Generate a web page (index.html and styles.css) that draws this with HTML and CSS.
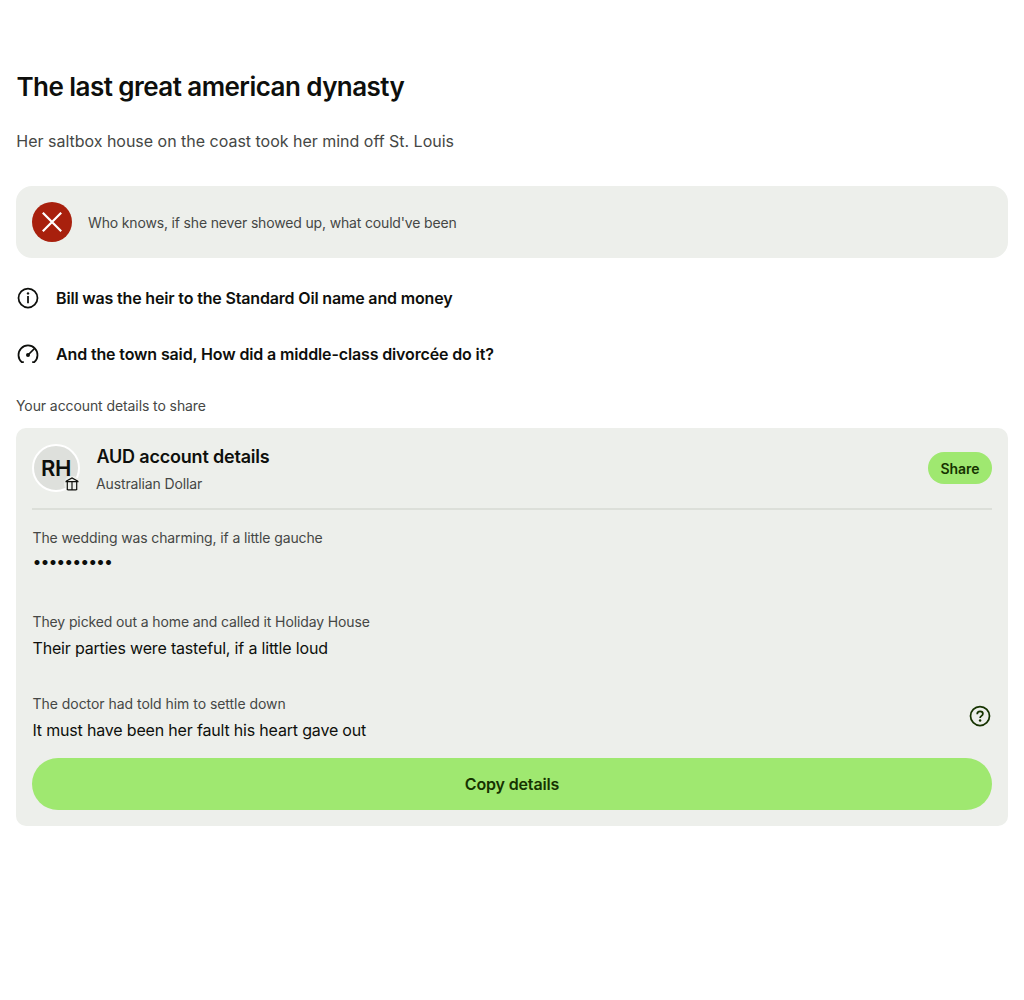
FILE: index.html
```html
<!DOCTYPE html>
<html lang="en">
<head>
<meta charset="utf-8">
<title>Account details</title>
<link rel="stylesheet" href="styles.css">
</head>
<body>
<main class="page">
  <h1 class="title">The last great american dynasty</h1>
  <p class="subtitle">Her saltbox house on the coast took her mind off St. Louis</p>
  <div class="alert">
    <svg class="alert-icon" viewBox="0 0 40 40"><circle cx="20" cy="20" r="20" fill="#a8200d"/><path d="M10.8 10.8 29.2 29.2M29.2 10.8 10.8 29.2" stroke="#fff" stroke-width="2.2"/></svg>
    <span class="alert-text">Who knows, if she never showed up, what could've been</span>
  </div>
  <ul class="summary">
    <li class="summary-item">
      <svg class="icon" viewBox="0 0 24 24"><circle cx="12" cy="12" r="9.5"/><path d="M12 10v7.200"/><circle class="dot" cx="12" cy="7.400" r="1.200"/></svg>
      <span class="first-text">Bill was the heir to the Standard Oil name and money</span>
    </li>
    <li class="summary-item">
      <svg class="icon" viewBox="0 0 24 24"><path d="M7.800 20.100H5.700A9.500 9.500 0 1 1 18.300 20.100H16.200"/><path d="M12 13 18.500 6.500"/><circle class="dot" cx="12" cy="13" r="2"/></svg>
      <span class="second-text">And the town said, How did a middle-class divorcée do it?</span>
    </li>
  </ul>
  <h2 class="section-label">Your account details to share</h2>
  <section class="card">
    <header class="card-header">
      <div class="avatar">RH
        <svg class="bank" viewBox="0 0 16 16"><path d="M2 5.300 8 1.900l6 3.400M1.500 5.700h13M3.300 6v8M8 6v8M12.700 6v8M2.600 13.800h10.800"/></svg>
      </div>
      <div class="heading">
        <h3 class="card-title">AUD account details</h3>
        <p class="card-subtitle">Australian Dollar</p>
      </div>
      <button class="share">Share</button>
    </header>
    <dl class="rows">
      <div class="row"><div><dt>The wedding was charming, if a little gauche</dt><dd class="masked">••••••••••</dd></div></div>
      <div class="row"><div><dt>They picked out a home and called it Holiday House</dt><dd>Their parties were tasteful, if a little loud</dd></div></div>
      <div class="row"><div><dt class="last-label">The doctor had told him to settle down</dt><dd>It must have been her fault his heart gave out</dd></div>
        <svg class="icon help" viewBox="0 0 24 24"><circle cx="12" cy="12" r="9.5"/><path d="M9.200 10.200c0-1.700 1.200-2.800 2.900-2.800s2.800 1 2.800 2.400c0 2.100-2.800 2-2.800 4.200"/><circle class="dot" cx="12.100" cy="16.500" r="1.250"/></svg></div>
    </dl>
    <button class="copy">Copy details</button>
  </section>
</main>
</body>
</html>
```
FILE: styles.css
```css
* { box-sizing: border-box; margin: 0; padding: 0; }
body { font-family: Inter, "Liberation Sans", sans-serif; font-size: 16px; line-height: 24px; color: #0e0f0c; background: #fff; }
.page { padding: 70px 16px 0; }
.title { padding-left: 0.5px; font-size: 26px; line-height: 34px; font-weight: 600; letter-spacing: -0.55px; }
.subtitle { margin-top: 25px; padding-left: 0.3px; color: #454745; letter-spacing: -0.015px; }
.alert { display: flex; align-items: center; gap: 16px; height: 72px; margin-top: 33px; padding: 16px; border-radius: 16px; background: #edefeb; }
.alert-icon { width: 40px; height: 40px; }
.alert-text { margin-top: 1px; font-size: 14px; line-height: 22px; letter-spacing: -0.16px; color: #454745; }
.summary { list-style: none; margin-top: 12px; }
.summary-item { display: flex; align-items: center; gap: 16px; height: 56px; font-weight: 600; }
.first-text { letter-spacing: -0.165px; }
.second-text { letter-spacing: -0.135px; }
.icon { width: 24px; height: 24px; fill: none; stroke: currentColor; stroke-width: 1.75; flex: none; }
.dot { fill: currentColor; stroke: none; }
.section-label { margin-top: 13px; font-size: 14px; line-height: 22px; font-weight: 400; letter-spacing: -0.09px; color: #454745; }
.card { height: 398px; margin-top: 11px; padding: 16px; border-radius: 10px; background: #edefeb; }
.card-header { display: flex; align-items: center; height: 66px; padding-bottom: 16px; margin-bottom: 16px; border-bottom: 2px solid #dcdfd9; }
.avatar { position: relative; display: flex; align-items: center; justify-content: center; width: 48px; height: 48px; border: 2px solid #fff; border-radius: 50%; background: #dee0dc; font-size: 22px; letter-spacing: -0.4px; font-weight: 600; }
.bank { position: absolute; right: -2px; bottom: -2px; width: 16px; height: 16px; border-radius: 50%; background: #edefeb; fill: none; stroke: currentColor; stroke-width: 1.2; }
.heading { flex: 1; margin-left: 16px; padding-top: 4px; }
.card-title { padding-left: 0.5px; font-size: 18px; line-height: 24px; font-weight: 600; letter-spacing: -0.19px; }
.card-subtitle { margin-top: 4px; font-size: 14px; line-height: 22px; letter-spacing: -0.12px; color: #454745; }
button { border: 0; font-family: inherit; font-weight: 600; color: #163300; background: #9fe870; }
.share { width: 64px; height: 32px; border-radius: 16px; font-size: 14px; }
.row { display: flex; align-items: center; justify-content: space-between; height: 50px; margin-bottom: 32px; }
.row:first-child { margin-bottom: 34px; }
.row:last-child { margin-bottom: 0; }
dt { padding-left: 0.5px; font-size: 14px; line-height: 22px; letter-spacing: -0.12px; color: #454745; }
.last-label { letter-spacing: -0.04px; }
dd { margin-top: 3px; padding-left: 0.5px; line-height: 24px; letter-spacing: -0.18px; }
.rows .masked { margin-top: 0; margin-bottom: 3px; font-size: 16px; letter-spacing: -1.05px; }
.help { margin-top: -3px; color: #163300; }
.copy { display: block; width: 100%; height: 52px; margin-top: 16px; border-radius: 26px; font-size: 16px; letter-spacing: -0.16px; }
```
